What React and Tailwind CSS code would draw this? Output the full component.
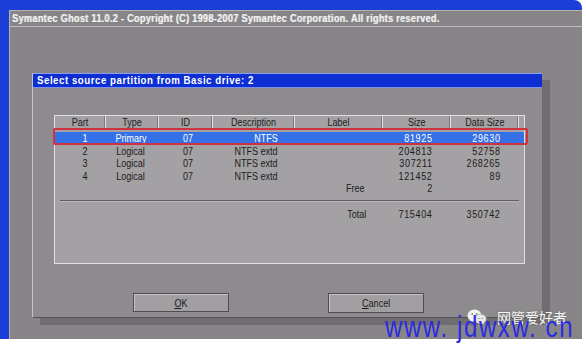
const rows = [
  { part: "1", type: "Primary", id: "07", desc: "NTFS", size: "81925", data: "29630", sel: true },
  { part: "2", type: "Logical", id: "07", desc: "NTFS extd", size: "204813", data: "52758" },
  { part: "3", type: "Logical", id: "07", desc: "NTFS extd", size: "307211", data: "268265" },
  { part: "4", type: "Logical", id: "07", desc: "NTFS extd", size: "121452", data: "89" },
];

const cols = "grid grid-cols-[51px_53px_54px_82px_88px_68px_68px_1fr]";
const heads = ["Part", "Type", "ID", "Description", "Label", "Size", "Data Size", ""];

// the Ghost font is narrow: squeeze the text, keep the cell
const T = ({ children, right }) => (
  <span className={`inline-block whitespace-nowrap scale-x-[0.82] ${right ? "origin-right" : "origin-center"}`}>{children}</span>
);

const WeChat = () => (
  <svg width="20" height="16" viewBox="0 0 20 16">
    <ellipse cx="7.5" cy="6.5" rx="7" ry="6" fill="#f2f2f2" />
    <path d="M3 11 L2 14.5 L6.5 12 Z" fill="#f2f2f2" />
    <ellipse cx="13.5" cy="10" rx="5.8" ry="4.8" fill="#e8e8e8" stroke="#9a989a" strokeWidth="0.6" />
    <path d="M16.5 14 L18 15.8 L14.5 14.6 Z" fill="#e8e8e8" />
    <circle cx="5.2" cy="5" r="0.9" fill="#8a888a" />
    <circle cx="9.6" cy="5" r="0.9" fill="#8a888a" />
    <circle cx="11.8" cy="9.4" r="0.7" fill="#8a888a" />
    <circle cx="15.2" cy="9.4" r="0.7" fill="#8a888a" />
  </svg>
);

export default function App() {
  const font = "font-['Liberation_Sans',Arial,sans-serif]";
  return (
    <div className="relative w-[586px] h-[344px] bg-white overflow-hidden">
      <div className={`w-[582px] h-[339px] bg-[#1b3ed6] rounded-tr-[8px] pl-[9px] pt-[10px] ${font}`}>
        <div className="flex h-full flex-col bg-[#878587] border-l border-t border-[#b4b2b4]">
          <div className="h-[16px] border-b border-[#bdbbbd] pl-[2px] text-[11px] font-bold leading-[15px] tracking-[0.3px] text-[#f4f4f4] [text-shadow:1px_0_0_#b0aeb0]">
            <span className="inline-block origin-left scale-x-[0.84] whitespace-nowrap">
              Symantec Ghost 11.0.2 - Copyright (C) 1998-2007 Symantec Corporation. All rights reserved.
            </span>
          </div>
          <div className="ml-[22px] mt-[46px] flex h-[245px] w-[510px] flex-col border-l border-b border-l-[#c4c2c4] border-b-[#555355] bg-[#8d8b8d] shadow-[8px_7px_0_#6f6d6f]">
            <div className="h-[15px] border-y border-t-[#8d9df0] border-b-[#7f90e8] bg-[#0c2ed2] pl-[4px] text-[11px] font-bold leading-[13px] tracking-[0.6px] text-white">
              <span className="inline-block origin-left scale-x-[0.88] whitespace-nowrap">Select source partition from Basic drive: 2</span>
            </div>
            <div className="relative ml-[21px] mt-[27px] h-[149px] w-[471px] border border-[#e2e0e2] bg-[#a3a1a3] text-[11px] leading-[12.5px] text-[#1c1c1c]">
              <div className={`${cols} h-[14px] text-[#202020]`}>
                {heads.map((h, i) => (
                  <div
                    key={i}
                    className={`text-center leading-[13px] ${i < 7 ? "border-r border-[#e4e2e4] shadow-[inset_-1px_0_0_#7a787a]" : ""}`}
                  >
                    <T>{h}</T>
                  </div>
                ))}
              </div>
              <div className="mt-[2px]">
                {rows.map((r) => (
                  <div key={r.part} className={`${cols} h-[12.5px] ${r.sel ? "bg-[#3470e6] text-white" : ""}`}>
                    <div className="pl-[10px] text-center"><T>{r.part}</T></div>
                    <div className="pr-[4px] text-center"><T>{r.type}</T></div>
                    <div className="pl-[5px] text-center"><T>{r.id}</T></div>
                    <div className="pr-[17px] text-right"><T right>{r.desc}</T></div>
                    <div />
                    <div className="pr-[18px] text-right tracking-[0.8px]"><T right>{r.size}</T></div>
                    <div className="pr-[18px] text-right tracking-[0.8px]"><T right>{r.data}</T></div>
                    <div />
                  </div>
                ))}
                <div className={`${cols} h-[12.5px]`}>
                  <div /><div /><div /><div />
                  <div className="pr-[18px] text-right"><T right>Free</T></div>
                  <div className="pr-[18px] text-right tracking-[0.8px]"><T right>2</T></div>
                  <div /><div />
                </div>
              </div>
              <div className="mx-[5px] mt-[5px] h-[2px] border-t border-b border-t-[#5f5d5f] border-b-[#b8b6b8]" />
              <div className={`${cols} mt-[6px] h-[12.5px]`}>
                <div /><div /><div /><div />
                <div className="pr-[17px] text-right"><T right>Total</T></div>
                <div className="pr-[18px] text-right tracking-[0.8px]"><T right>715404</T></div>
                <div className="pr-[18px] text-right tracking-[0.8px]"><T right>350742</T></div>
                <div />
              </div>
              <div className="absolute left-[-2px] top-[12px] h-[17px] w-[475px] rounded-[2px] border-2 border-[#cf3340]" />
            </div>
            <div className="mt-[29px] flex pl-[100px] text-[11px] text-[#1c1c1c]">
              <button className="h-[19px] w-[96px] border border-[#4f4d4f] bg-[#a19fa1] shadow-[inset_1px_1px_0_#c6c4c6] leading-[16px]">
                <T><span className="underline">O</span>K</T>
              </button>
              <button className="ml-[99px] h-[20px] w-[96px] border border-[#4f4d4f] bg-[#a19fa1] shadow-[inset_1px_1px_0_#c6c4c6] leading-[17px]">
                <T><span className="underline">C</span>ancel</T>
              </button>
            </div>
          </div>
        </div>
      </div>
      <div className="absolute left-[467px] top-[309px] flex items-center gap-[10px]">
        <WeChat />
        <span className="font-['Noto_Sans_CJK_SC',sans-serif] text-[14px] leading-[16px] text-[#f6f6f6] [text-shadow:0_0_2px_#707070]">网管爱好者</span>
      </div>
      <div className="absolute left-[385px] top-[313px] origin-top scale-y-[1.2] whitespace-pre font-['Liberation_Sans',Arial,sans-serif] text-[24px] leading-[24px] tracking-[1.6px] text-[#2a2ae2]">
        www. jdwxw. cn
      </div>
    </div>
  );
}
